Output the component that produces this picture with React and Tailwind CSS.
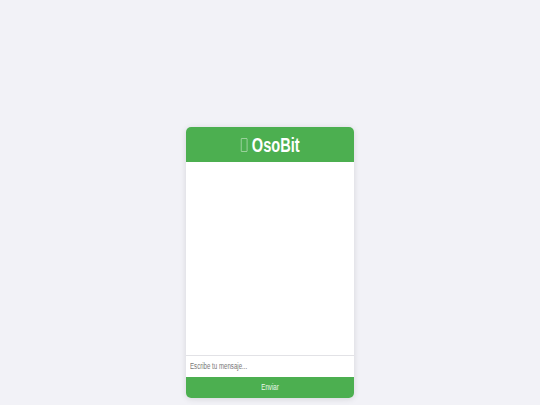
import React from "react";

export default function App() {
  return (
    <div className="w-[540px] h-[405px] bg-[#f2f2f7] flex flex-col items-center pt-[127px] overflow-hidden" style={{ fontFamily: '"Liberation Sans", Arial, sans-serif' }}>
      <div className="w-[168px] h-[271px] flex flex-col rounded-[5px] bg-white shadow-[0_1px_6px_rgba(0,0,0,0.12)] overflow-hidden">
        <div className="h-[35px] bg-[#4caf50] flex items-center justify-center text-white">
          <span className="inline-flex items-center gap-[6px] scale-x-[0.73]">
            <span className="inline-block w-[9px] h-[14px] border border-white/50 rounded-[1px]"></span>
            <span className="text-[20px] font-bold leading-none">OsoBit</span>
          </span>
        </div>
        <div className="flex-1 bg-white"></div>
        <div className="h-[22px] border-t border-[#e2e2e6] bg-white flex items-center pl-[4px]">
          <span className="text-[8.5px] text-[#777] origin-left scale-x-[0.72] inline-block whitespace-nowrap">Escribe tu mensaje...</span>
        </div>
        <div className="h-[21px] bg-[#4caf50] flex items-center justify-center">
          <span className="text-[8.5px] text-white/90 scale-x-[0.72] inline-block">Enviar</span>
        </div>
      </div>
    </div>
  );
}
